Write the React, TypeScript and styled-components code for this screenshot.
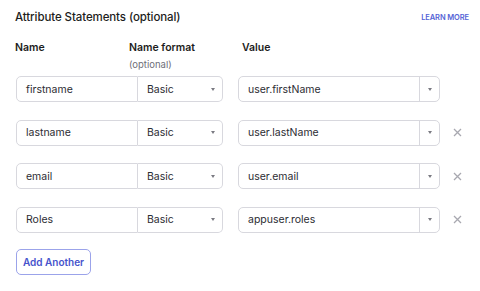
import React from "react";
import styled, {createGlobalStyle} from "styled-components";

type Statement = {
  name: string
  format: string
  value: string
  removable: boolean
}

const statements: Statement[] = [
  {name: 'firstname', format: 'Basic', value: 'user.firstName', removable: false},
  {name: 'lastname', format: 'Basic', value: 'user.lastName', removable: true},
  {name: 'email', format: 'Basic', value: 'user.email', removable: true},
  {name: 'Roles', format: 'Basic', value: 'appuser.roles', removable: true},
]

const GlobalStyle = createGlobalStyle`
  body {
    margin: 0;
    background: #fff;
    font-family: Inter, "Noto Sans", sans-serif;
    color: #1d1d21;
  }
`

const Section = styled.div`
  width: 480px;
  height: 291px;
  padding: 9px 11px 0 16px;
  box-sizing: border-box;
`

const Header = styled.div`
  display: flex;
  align-items: center;
  justify-content: space-between;
  height: 16px;
`

const Title = styled.div`
  font-size: 11.5px;
  font-weight: 500;
  letter-spacing: -0.1px;
  margin-left: -1px;
`

const LearnMore = styled.a`
  font-size: 7.5px;
  font-weight: 600;
  color: #5563d6;
  text-decoration: none;
  letter-spacing: -0.1px;
`

const Columns = styled.div`
  display: grid;
  grid-template-columns: 114px 113px auto;
  margin-top: 17px;
  margin-left: -1px;
`

const ColumnTitle = styled.div`
  font-size: 10.5px;
  font-weight: 600;
  line-height: 12px;
`

const ColumnHint = styled.div`
  font-size: 9.5px;
  color: #6e6e78;
  margin-top: 5px;
  line-height: 12px;
`

const Rows = styled.div`
  display: flex;
  flex-direction: column;
  gap: 17.5px;
  margin-top: 5px;
`

const Row = styled.div`
  display: flex;
  align-items: center;
  height: 26px;
`

const Field = styled.div<{width: number}>`
  display: flex;
  align-items: stretch;
  width: ${p => p.width}px;
  height: 26px;
  border: 1px solid #d8d8de;
  border-radius: 5px;
  box-sizing: border-box;
  font-size: 10.5px;
  color: #2c2c33;
  background: #fff;
`

const NameField = styled(Field)`
  border-top-right-radius: 0;
  border-bottom-right-radius: 0;
`

const FormatField = styled(Field)`
  border-left: none;
  border-top-left-radius: 0;
  border-bottom-left-radius: 0;
  margin-right: 15px;
`

const FieldText = styled.div`
  flex: 1;
  display: flex;
  align-items: center;
  padding-left: 9px;
`

const Arrow = styled.div<{divided?: boolean}>`
  width: 19px;
  display: flex;
  align-items: center;
  justify-content: center;
  border-left: ${p => p.divided ? '1px solid #d8d8de' : 'none'};

  &::after {
    content: '';
    border-left: 2.5px solid transparent;
    border-right: 2.5px solid transparent;
    border-top: 3px solid #7a7a82;
  }
`

const Remove = styled.button`
  width: 20px;
  height: 20px;
  margin-left: 7px;
  padding: 0;
  border: none;
  background: none;
  display: flex;
  align-items: center;
  justify-content: center;
  color: #a8a8b0;
  cursor: pointer;
`

const AddButton = styled.button`
  margin-top: 16px;
  width: 75px;
  height: 26px;
  border: 1px solid #9ba3ea;
  border-radius: 5px;
  background: #fff;
  color: #4653cc;
  font-family: Inter, "Noto Sans", sans-serif;
  font-size: 10px;
  font-weight: 600;
  padding: 0;
  cursor: pointer;
`

const CloseIcon = () => (
  <svg width="9" height="9" viewBox="0 0 9 9" fill="none" stroke="currentColor" strokeWidth="1.3">
    <path d="M1 1L8 8M8 1L1 8"/>
  </svg>
)

const App = () => {
  return (
    <>
      <GlobalStyle/>
      <Section>
        <Header>
          <Title>Attribute Statements (optional)</Title>
          <LearnMore href="#">LEARN MORE</LearnMore>
        </Header>
        <Columns>
          <ColumnTitle>Name</ColumnTitle>
          <div>
            <ColumnTitle>Name format</ColumnTitle>
            <ColumnHint>(optional)</ColumnHint>
          </div>
          <ColumnTitle>Value</ColumnTitle>
        </Columns>
        <Rows>
          {statements.map(s => (
            <Row key={s.name}>
              <NameField width={122}>
                <FieldText>{s.name}</FieldText>
              </NameField>
              <FormatField width={85}>
                <FieldText>{s.format}</FieldText>
                <Arrow/>
              </FormatField>
              <Field width={202}>
                <FieldText>{s.value}</FieldText>
                <Arrow divided/>
              </Field>
              {s.removable && <Remove><CloseIcon/></Remove>}
            </Row>
          ))}
        </Rows>
        <AddButton>Add Another</AddButton>
      </Section>
    </>
  )
};

export default App
